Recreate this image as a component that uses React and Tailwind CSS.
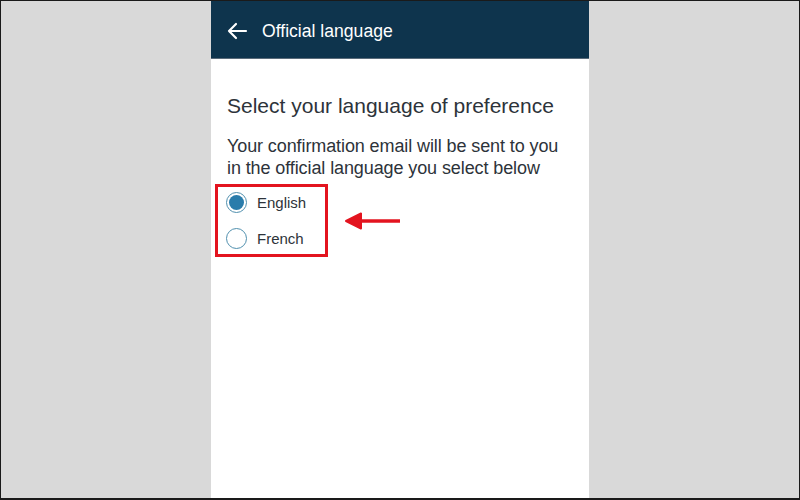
import React, { useState } from 'react';

const Radio = ({ checked }) => (
  <span className="w-[21px] h-[21px] rounded-full border-[1.5px] border-[#4f8fae] flex items-center justify-center bg-white">
    {checked && <span className="w-[15px] h-[15px] rounded-full bg-[#2a7cab]" />}
  </span>
);

export default function App() {
  const [lang, setLang] = useState('English');
  const options = ['English', 'French'];

  return (
    <div className="w-[800px] h-[500px] bg-[#d9d9d9] border border-[#1a1a1a] border-b-2 flex justify-center" style={{ fontFamily: '"Liberation Sans", Arial, sans-serif' }}>
      <div className="w-[378px] h-full bg-white flex flex-col">
        {/* Header */}
        <div className="h-[58px] bg-[#0e344d] flex items-center pl-[15px] pt-[3px] border-b border-[#5a6b7a]">
          <svg width="22" height="18" viewBox="0 0 22 18" className="mr-[14px]">
            <path d="M20 9H3M10 2L3 9l7 7" fill="none" stroke="#fff" strokeWidth="2.2" strokeLinecap="round" strokeLinejoin="round" />
          </svg>
          <span className="text-white text-[17.6px]">Official language</span>
        </div>

        <div className="px-[16px] pt-[35px]">
          <h1 className="text-[21px] text-[#2d333a] leading-[24px]">Select your language of preference</h1>
          <p className="mt-[17px] text-[18px] text-[#2d333a] leading-[22px] tracking-[-0.1px]">
            Your confirmation email will be sent to you in the official language you select below
          </p>

          <div className="flex items-center mt-[5px]">
            <div className="w-[113px] border-[3px] border-[#e3141f] -ml-[12px] pl-[8px] py-[5px] flex flex-col gap-[15px]">
              {options.map(opt => (
                <button key={opt} onClick={() => setLang(opt)} className="flex items-center gap-[10px] text-[15px] text-[#2d333a] leading-[20px]">
                  <Radio checked={lang === opt} />
                  {opt}
                </button>
              ))}
            </div>
            <svg width="58" height="20" viewBox="0 0 58 20" className="ml-[16px]">
              <path d="M16 10H56" stroke="#e3141f" strokeWidth="3.5" />
              <path d="M2 10L17 2.5V17.5Z" fill="#e3141f" stroke="#e3141f" strokeWidth="2" strokeLinejoin="round" />
            </svg>
          </div>
        </div>
      </div>
    </div>
  );
}
